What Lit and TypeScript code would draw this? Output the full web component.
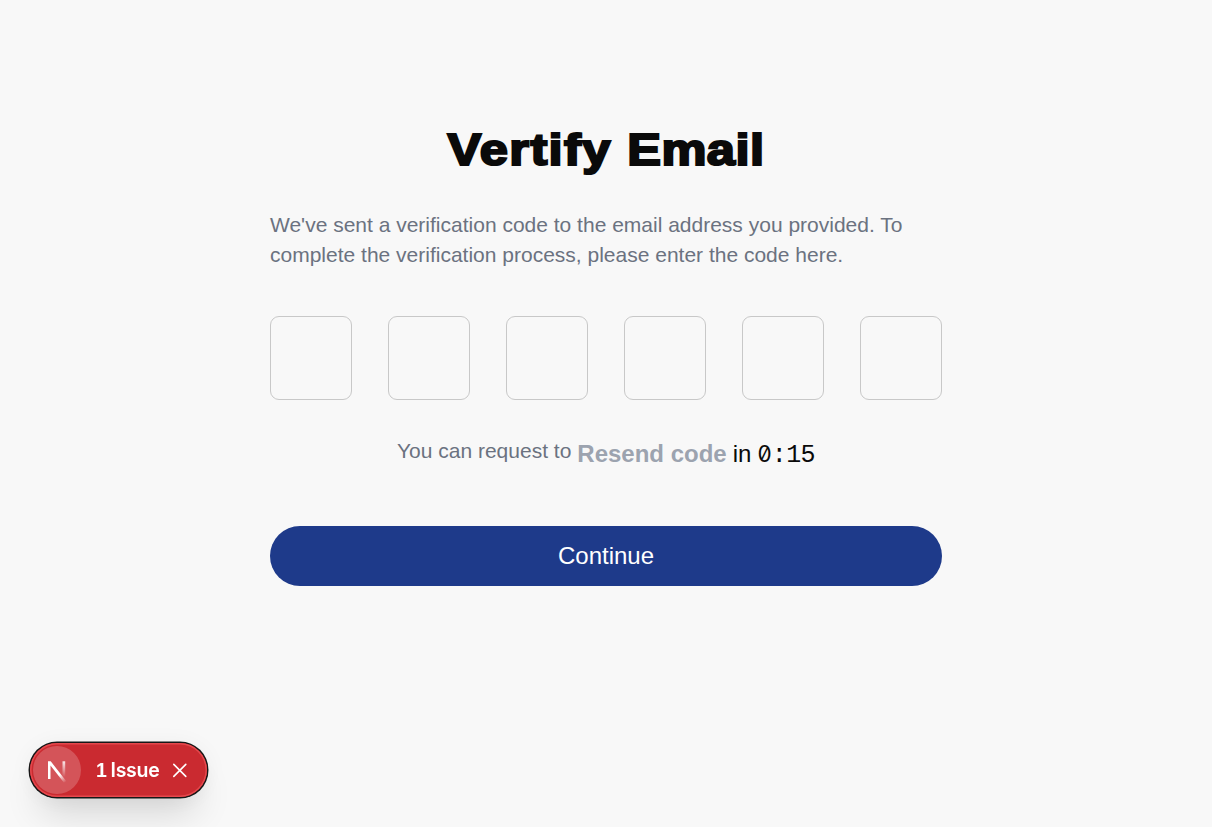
import { LitElement, html, css } from "lit";
import { customElement } from "lit/decorators.js";

@customElement("issue-badge")
class IssueBadge extends LitElement {
  static styles = css`
    :host { position: fixed; left: 30px; top: 743px; display: block; }
    .pill {
      box-sizing: border-box; width: 177px; height: 54px; padding: 3px;
      display: flex; align-items: center; border-radius: 27px;
      background: #ca2a30; color: #fff;
      box-shadow: 0 0 0 1.5px #171717, inset 0 0 0 1.5px #e5484d,
        0 24px 36px -8px rgba(0, 0, 0, 0.14), 0 3px 24px rgba(0, 0, 0, 0.06);
      font: 600 19.5px/24px Inter, "Liberation Sans", sans-serif;
    }
    .logo {
      width: 48px; height: 48px; border-radius: 50%; flex: none;
      background: rgba(255, 255, 255, 0.2); display: grid; place-items: center;
    }
    .label { display: flex; margin-left: 15px; letter-spacing: -0.25px; width: 64px; white-space: nowrap; }
    .count { width: 14.5px; font: 700 19.5px/24px "Liberation Sans", sans-serif; }
    .close { margin-left: 11px; display: block; }
    svg { display: block; }
  `;
  render() {
    return html`<div class="pill">
      <span class="logo"><svg width="48" height="48" viewBox="0 0 48 48" fill="none">
        <defs>
          <linearGradient id="diag" gradientUnits="userSpaceOnUse" x1="27.5" y1="28" x2="33" y2="36">
            <stop stop-color="#fff"/><stop offset="1" stop-color="#fff" stop-opacity="0"/>
          </linearGradient>
          <linearGradient id="stem" gradientUnits="userSpaceOnUse" x1="31" y1="13" x2="31" y2="31">
            <stop stop-color="#fff"/><stop offset="1" stop-color="#fff" stop-opacity="0"/>
          </linearGradient>
        </defs>
        <path d="M15 33V15.3H17.7L33.3 35.2L31 36.8L17.5 19.4V33Z" fill="url(#diag)"/>
        <rect x="29.5" y="15.3" width="2.7" height="16.5" fill="url(#stem)"/>
      </svg></span>
      <span class="label"><span class="count">1</span> <span>Issue</span></span>
      <svg class="close" width="16" height="16" viewBox="0 0 16 16" stroke="#fff" stroke-width="1.6" stroke-linecap="round">
        <path d="M2.8 2.4L14.8 14.4M14.8 2.4L2.8 14.4"/>
      </svg>
    </div>`;
  }
}

@customElement("app-root")
class AppRoot extends LitElement {
  static styles = css`
    :host {
      display: block; box-sizing: border-box; height: 100vh; overflow: hidden;
      background: #f8f8f8; color: #0a0a0a; padding-top: 117px;
      font-family: "Liberation Sans", Arial, sans-serif;
    }
    .card { width: 672px; margin: 0 auto; }
    h1 {
      margin: 0; height: 63px; text-align: center; white-space: nowrap;
      font: 700 45px/66px "Liberation Sans", sans-serif;
      letter-spacing: 1.2px; -webkit-text-stroke: 2.2px #0a0a0a;
      transform: scaleX(1.125);
    }
    .second { letter-spacing: 0.4px; }
    p { margin: 30px 0 0; font-size: 21px; line-height: 30px; color: #6b7280; }
    .code { display: flex; justify-content: space-between; margin-top: 46px; }
    .cell {
      box-sizing: border-box; width: 82px; height: 84px; padding: 0;
      border: 1px solid #c8c8c8; border-radius: 9px; background: transparent;
    }
    .resend {
      display: flex; justify-content: center; height: 36px; margin-top: 36px;
      gap: 6px; font-size: 24px; line-height: 36px; white-space: nowrap;
    }
    .hint { font-size: 21px; line-height: 30px; color: #6b7280; }
    .link { font-weight: 700; color: #9ca3af; }
    .timer { display: flex; gap: 6px; align-items: baseline; }
    .time { font-family: "Liberation Mono", monospace; font-size: 25px; letter-spacing: -0.6px; line-height: 36px; }
    .zero {
      display: inline-block; width: 14.4px; text-align: center; letter-spacing: 0;
      font-family: Inter, sans-serif; font-feature-settings: "zero" 1; font-size: 22.5px;
      line-height: 24px;
    }
    .continue {
      display: block; width: 100%; height: 60px; margin-top: 54px; padding: 0;
      border: 0; border-radius: 30px; background: #1e3a8a; color: #fff;
      font: 24px/60px "Liberation Sans", Arial, sans-serif;
    }
  `;
  render() {
    return html`<main class="card">
        <h1>Vertify <span class="second">Email</span></h1>
        <p>We've sent a verification code to the email address you provided. To complete the verification process, please enter the code here.</p>
        <div class="code">${[1, 2, 3, 4, 5, 6].map((n) => html`<input class="cell" maxlength="1" aria-label="Digit ${n}" />`)}</div>
        <div class="resend">
          <span class="hint">You can request to</span>
          <span class="link">Resend code</span>
          <span class="timer"><span>in</span><span class="time"><span class="zero">0</span>:15</span></span>
        </div>
        <button class="continue">Continue</button>
      </main>
      <issue-badge></issue-badge>`;
  }
}
